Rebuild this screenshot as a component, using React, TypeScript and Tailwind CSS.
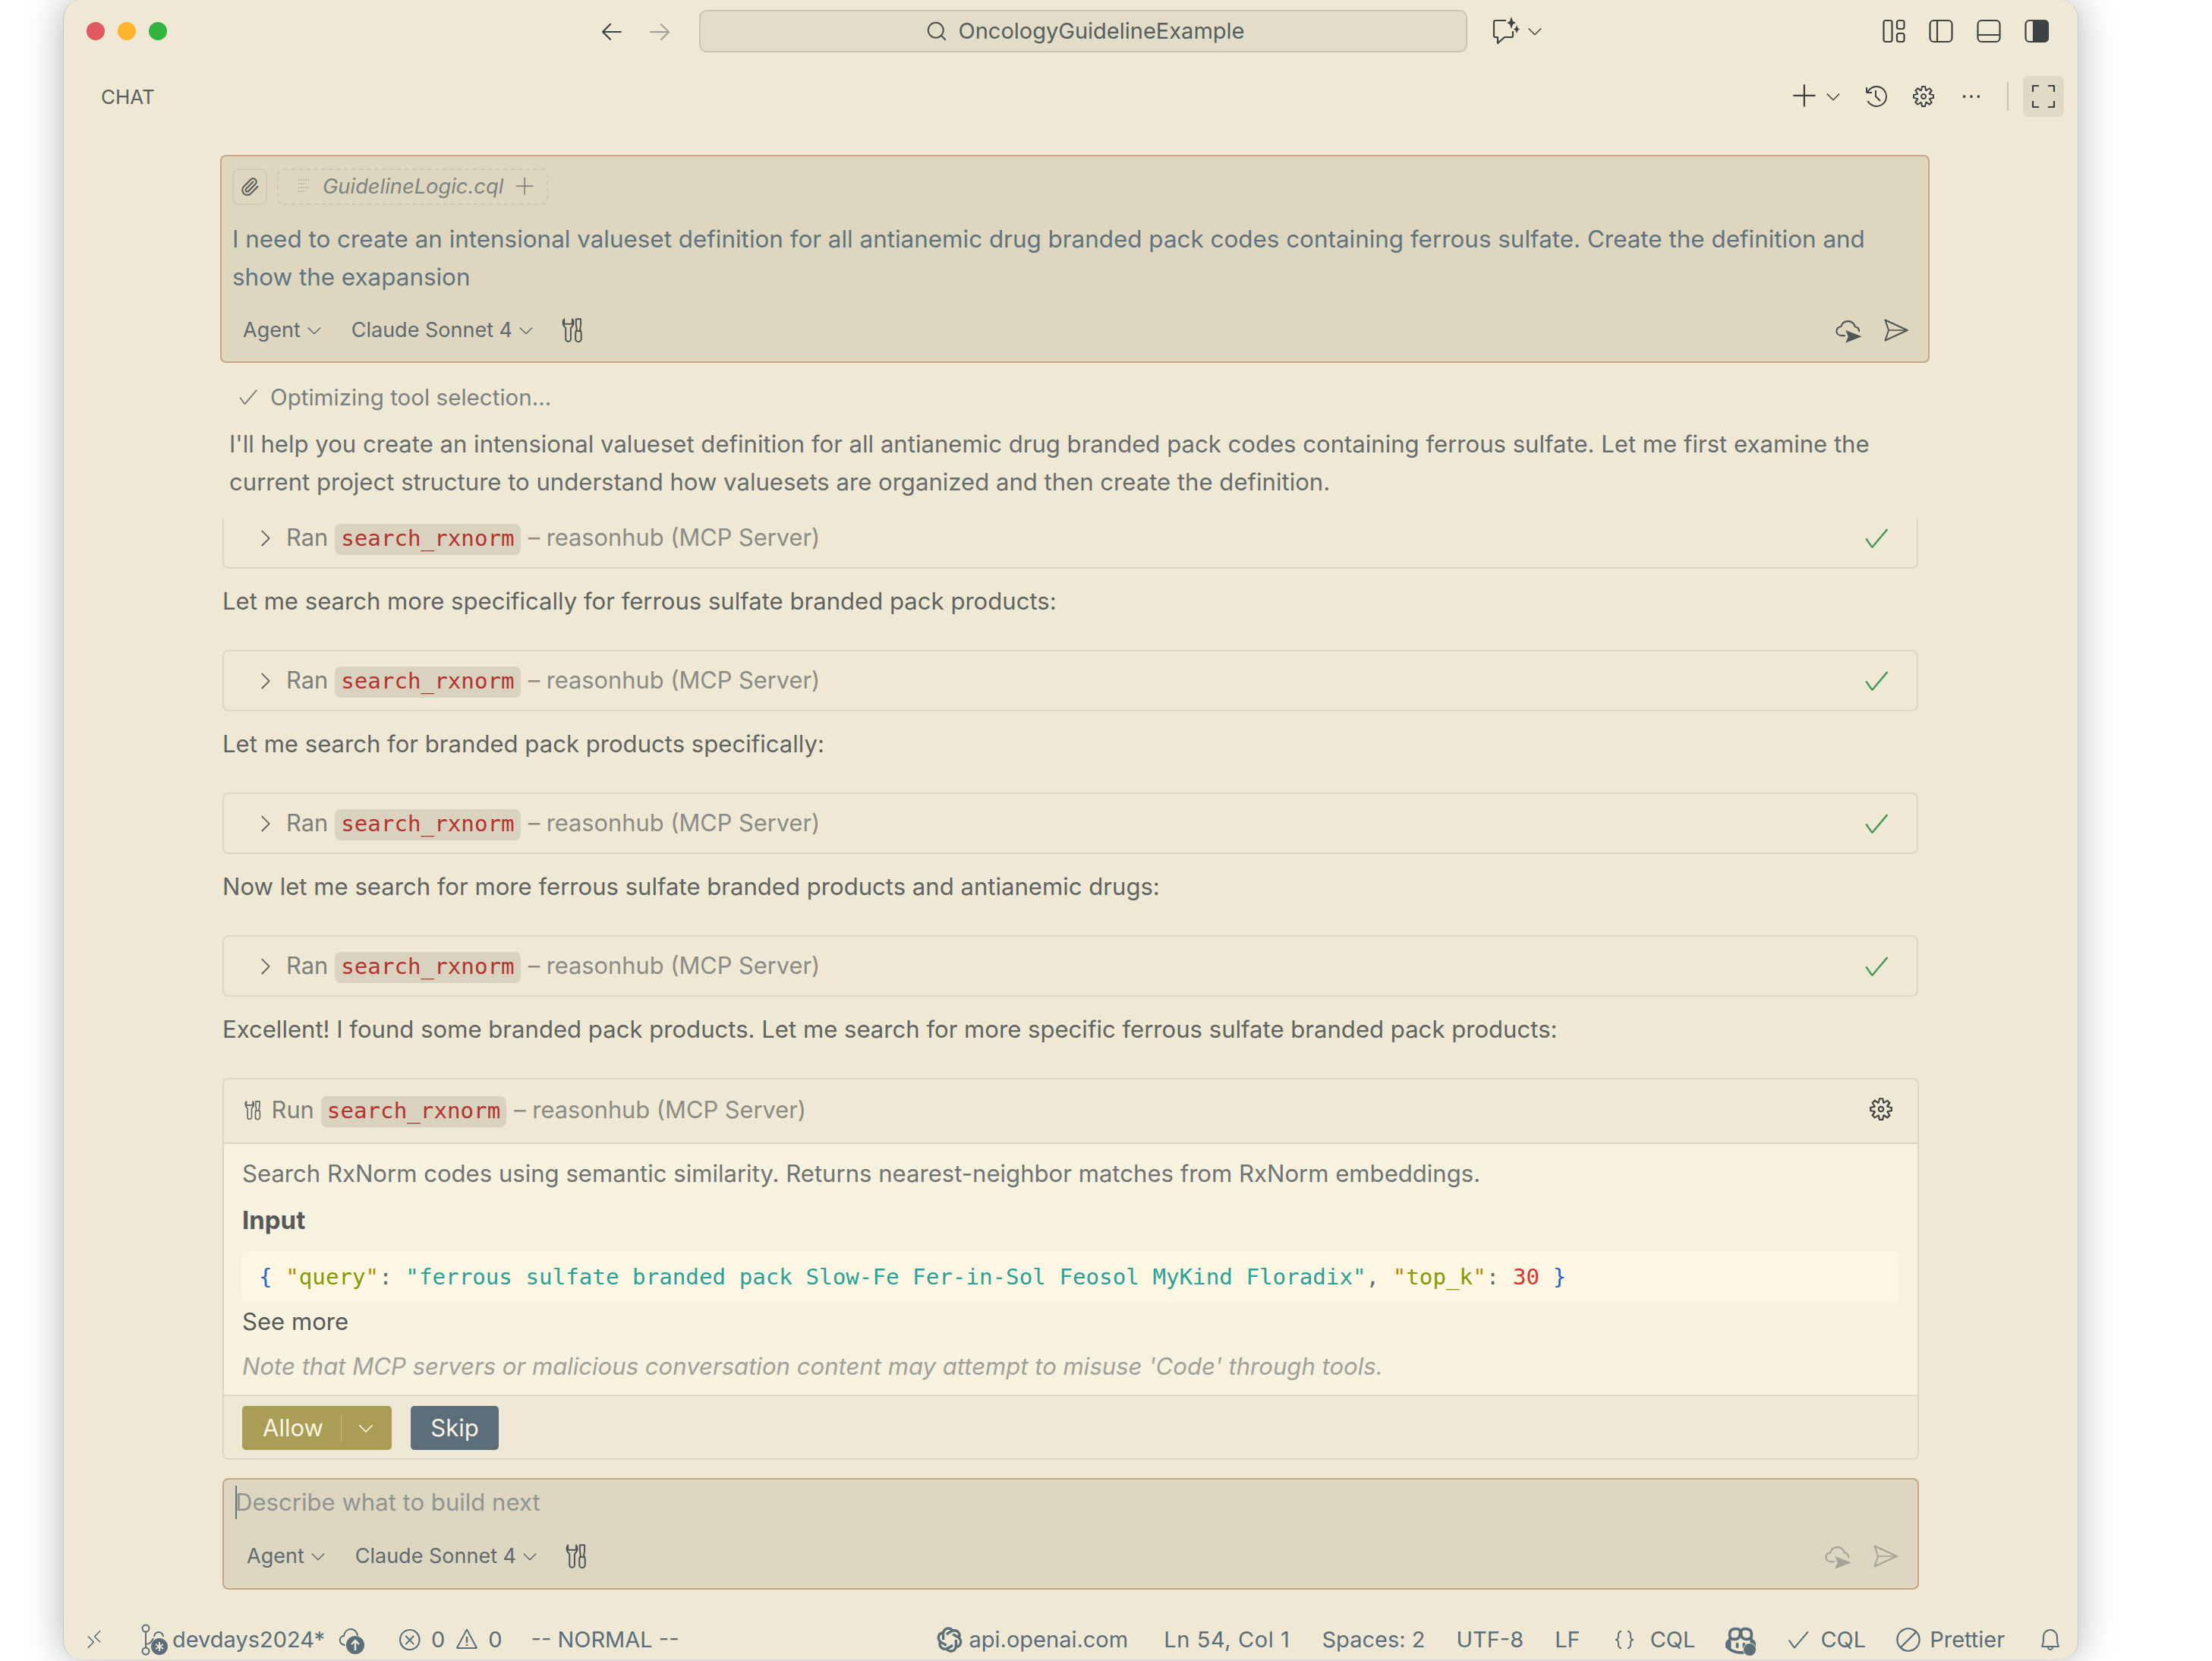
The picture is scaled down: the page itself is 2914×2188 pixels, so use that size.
import React from "react";
import { Paperclip, Search } from "lucide-react";
import { RiOpenaiLine } from "react-icons/ri";
import {
  VscAdd, VscArrowLeft, VscArrowRight, VscBell, VscCheck, VscChevronDown, VscChevronRight, VscCircleSlash,
  VscCopilot, VscEllipsis, VscError, VscGear, VscHistory, VscJson, VscRemote, VscWarning,
} from "react-icons/vsc";

function ToolsIcon({ size = 34 }: { size?: number }) {
  return (
    <svg width={size * 0.8} height={size} viewBox="0 0 26 32" fill="none" stroke="currentColor" strokeWidth="1.9" strokeLinejoin="round">
      <path d="M3 2 C1 4 1 9 3 11 C4 12 5 12.5 5 14 V27 a3.2 3.2 0 0 0 6.4 0 V14 C11.4 12.5 12.5 12 13.4 11 C15.4 9 15.4 4 13.4 2 V8 H10.4 H6 H3 Z" />
      <path d="M18 2 H24 V9 L23 15 C24 17 24.6 18 24.6 20 V27 a3.6 3.6 0 0 1 -7.2 0 V20 C17.4 18 18 17 19 15 L18 9 Z" />
      <path d="M17.6 17 H24.4" />
    </svg>
  );
}

function SendIcon({ size = 36 }: { size?: number }) {
  return (
    <svg width={size} height={size} viewBox="0 0 32 32" fill="none" stroke="currentColor" strokeWidth="1.8" strokeLinejoin="round">
      <path d="M4 4 L30 16 L4 28 L8 16 Z" />
      <path d="M8 16 H30" strokeWidth="1.4" />
    </svg>
  );
}

function CloudSendIcon({ size = 38 }: { size?: number }) {
  return (
    <svg width={size} height={size} viewBox="0 0 32 32" fill="none" stroke="currentColor" strokeWidth="1.8">
      <path d="M11 22 H8 C4 22 2 19.5 2 17 C2 14 4.5 12 7 12 C8 8 11 6 15 6 C19 6 22 9 22.5 12 C25 12.5 27 14.5 27 17" strokeLinecap="round" />
      <path d="M12 16 L30 23 L12 30 L15 23 Z" fill="currentColor" stroke="none" />
    </svg>
  );
}

function ChatSparkIcon() {
  return (
    <svg width="40" height="40" viewBox="0 0 40 40" fill="none" stroke="currentColor" strokeWidth="2.2">
      <path d="M20 6 H6 a2 2 0 0 0 -2 2 V26 a2 2 0 0 0 2 2 H9 V36 L18 28 H27 a2 2 0 0 0 2 -2 V20" strokeLinejoin="round" />
      <path d="M27 1 L29 7 L33 9 L29 11 L27 17 L25 11 L21 9 L25 7 Z" fill="currentColor" stroke="none" />
      <path d="M34 12 L35.5 16 L38 17.5 L35.5 19 L34 23 L32.5 19 L30 17.5 L32.5 16 Z" fill="currentColor" stroke="none" />
    </svg>
  );
}

function LayoutCustomIcon() {
  return (
    <svg width="30" height="32" viewBox="0 0 30 32" fill="none" stroke="currentColor" strokeWidth="2.2">
      <rect x="1.5" y="2" width="11" height="28" rx="2.5" />
      <rect x="19" y="2" width="9.5" height="11" rx="2.5" />
      <rect x="19" y="19" width="9.5" height="11" rx="2.5" />
    </svg>
  );
}

function SidebarLeftIcon() {
  return (
    <svg width="32" height="32" viewBox="0 0 32 32" fill="none" stroke="currentColor" strokeWidth="2.2">
      <rect x="1.5" y="2" width="29" height="28" rx="5" />
      <path d="M11 2 V30" />
    </svg>
  );
}

function PanelIcon() {
  return (
    <svg width="32" height="32" viewBox="0 0 32 32" fill="none" stroke="currentColor" strokeWidth="2.2">
      <rect x="1.5" y="2" width="29" height="28" rx="5" />
      <path d="M1.5 21 H30.5" />
    </svg>
  );
}

function SidebarRightFilledIcon() {
  return (
    <svg width="32" height="32" viewBox="0 0 32 32" fill="none" stroke="currentColor" strokeWidth="2.2">
      <rect x="1.5" y="2" width="29" height="28" rx="5" />
      <path d="M12 2 H26 a5 5 0 0 1 5 5 V25 a5 5 0 0 1 -5 5 H12 Z" fill="currentColor" />
    </svg>
  );
}

function FullCornersIcon() {
  return (
    <svg width="32" height="32" viewBox="0 0 32 32" fill="none" stroke="currentColor" strokeWidth="2.2">
      <path d="M2 10 V2 H10 M22 2 H30 V10 M2 22 V30 H10 M22 30 H30 V22" strokeLinejoin="round" />
    </svg>
  );
}

function GitStarIcon() {
  return (
    <svg width="38" height="44" viewBox="0 0 38 44" fill="none" stroke="currentColor" strokeWidth="2">
      <circle cx="8" cy="7" r="4.5" />
      <circle cx="8" cy="37" r="4.5" />
      <path d="M8 12 V32" />
      <path d="M8 28 C14 28 16 24 18 20" />
      <path d="M19 18 a6 6 0 0 1 12 0" />
      <circle cx="26" cy="31" r="11" fill="currentColor" stroke="none" />
      <path d="M26 25 V37 M21 28 L31 34 M31 28 L21 34" stroke="#efe8d5" strokeWidth="2" />
    </svg>
  );
}

function CloudUpIcon() {
  return (
    <svg width="36" height="40" viewBox="0 0 36 40" fill="none" stroke="currentColor" strokeWidth="2">
      <path d="M8 27 C3 26 1 23 2 19 C3 16 5 15 7 15 C8 9 12 6 16 6 C21 6 24 10 25 14" strokeLinecap="round" />
      <circle cx="22" cy="27" r="12" fill="currentColor" stroke="none" />
      <path d="M22 34 V21 M17 26 L22 21 L27 26" stroke="#efe8d5" strokeWidth="2.4" />
    </svg>
  );
}

function FileLines() {
  return (
    <svg width="18" height="24" viewBox="0 0 18 24" fill="none" stroke="#b8b29f" strokeWidth="1.6" strokeDasharray="2 1">
      <path d="M2 3 H16 M2 8 H12 M2 13 H16 M2 18 H12" />
    </svg>
  );
}

function Code() {
  return (
    <span className="inline-flex items-center h-[41px] px-[8px] rounded-[8px] bg-[#d8d2bf] text-[#b5332e] font-['DejaVu_Sans_Mono',monospace] text-[29.2px] leading-none">
      search_rxnorm
    </span>
  );
}

function RanCard({ clipped = false }: { clipped?: boolean }) {
  return (
    <div
      className={
        clipped
          ? "flex items-center w-[2234px] h-[66px] pb-[13px] mt-[23px] text-[30.8px] border-x-2 border-b-2 border-[#dcd6c3] rounded-b-[8px]"
          : "flex items-center w-[2234px] h-[81px] text-[30.8px] border-2 border-[#dcd6c3] rounded-[8px]"
      }
    >
      <VscChevronRight size={34} className="ml-[37px] text-[#5f6463]" />
      <span className="ml-[11px] text-[#7c7f7a]">Ran</span>
      <span className="ml-[9px]"><Code /></span>
      <span className="ml-[10px] text-[#8a8c85]">– reasonhub (MCP Server)</span>
      <VscCheck size={38} className="ml-auto mr-[34px] text-[#3f9a56]" />
    </div>
  );
}

function Para({ children }: { children: React.ReactNode }) {
  return <div className="mt-[18px] mb-[39px] h-[50px] leading-[50px] text-[#5f6462]">{children}</div>;
}

function Toolbar({ dim = false }: { dim?: boolean }) {
  return (
    <div className="flex items-center h-[40px] text-[27px] text-[#5f6b70]">
      <span>Agent</span>
      <VscChevronDown size={28} className="ml-[4px]" />
      <span className="ml-[35px]">Claude Sonnet 4</span>
      <VscChevronDown size={28} className="ml-[4px]" />
      <span className="ml-[33px] text-[#4d5655]"><ToolsIcon /></span>
      <span className={dim ? "ml-auto mr-[25px] flex items-center gap-[24px] text-[#a3a49a]" : "ml-auto mr-[11px] flex items-center gap-[24px] text-[#4f5857]"}>
        <CloudSendIcon />
        <SendIcon />
      </span>
    </div>
  );
}

export default function App() {
  return (
    <div className="w-[2914px] h-[2188px] bg-white overflow-hidden font-[Inter,sans-serif] text-[31.1px]">
      <div className="ml-[83px] w-[2655px] h-[2186px] flex flex-col rounded-[24px] bg-[#efe8d5] border-x border-[#c9c8c2] shadow-[0_0_50px_rgba(0,0,0,0.3)] overflow-hidden">
        {/* title bar */}
        <div className="flex items-center h-[82px] shrink-0 pl-[30px] pr-[38px]">
          <span className="w-[24px] h-[24px] rounded-full bg-[#e05a5f]" />
          <span className="ml-[17px] w-[24px] h-[24px] rounded-full bg-[#fdb52b]" />
          <span className="ml-[17px] w-[24px] h-[24px] rounded-full bg-[#32b43f]" />
          <VscArrowLeft size={34} className="ml-[569px] text-[#3c4443]" />
          <VscArrowRight size={34} className="ml-[29px] text-[#9fa39a]" />
          <div className="ml-[35px] w-[1012px] h-[56px] flex items-center justify-center gap-[14px] pl-[4px] rounded-[10px] bg-[#e3dcc8] border-2 border-[#c8c5b4] text-[#55605f] text-[29px]">
            <Search size={30} strokeWidth={1.6} className="text-[#4a5352]" />
            <span>OncologyGuidelineExample</span>
          </div>
          <span className="ml-[31px] text-[#3c4443]"><ChatSparkIcon /></span>
          <VscChevronDown size={28} className="ml-[4px] text-[#3c4443]" />
          <div className="ml-auto flex items-center gap-[31px] text-[#3c4443]">
            <LayoutCustomIcon />
            <SidebarLeftIcon />
            <PanelIcon />
            <SidebarRightFilledIcon />
          </div>
        </div>
        {/* chat header */}
        <div className="flex items-center h-[90px] shrink-0 pl-[49px] pr-[18px]">
          <span className="text-[#5a6160] text-[26px]">CHAT</span>
          <div className="ml-auto flex items-center text-[#3c4443]">
            <VscAdd size={36} />
            <VscChevronDown size={28} className="ml-[5px]" />
            <VscHistory size={32} className="ml-[27px]" />
            <VscGear size={32} className="ml-[30px]" />
            <VscEllipsis size={30} className="ml-[32px]" />
            <span className="ml-[32px] w-[2px] h-[38px] bg-[#c8c5b4]" />
            <span className="ml-[19px] w-[54px] h-[54px] rounded-[8px] bg-[#dfd9c6] flex items-center justify-center">
              <FullCornersIcon />
            </span>
          </div>
        </div>

        <div className="flex flex-col pl-[209px] flex-1 min-h-0">
          {/* prompt */}
          <div className="w-[2252px] h-[274px] mt-[32px] -ml-[3px] shrink-0 rounded-[8px] bg-[#ded6be] border-2 border-[#c6a583] pl-[14px] pr-[14px] pt-[16px]">
            <div className="flex items-center h-[48px] gap-[13px]">
              <span className="w-[46px] h-[48px] flex items-center justify-center rounded-[8px] border-2 border-[#d2cbb6] text-[#5a6160]">
                <Paperclip size={26} />
              </span>
              <span className="w-[357px] h-[48px] flex items-center rounded-[8px] border-2 border-dashed border-[#cfc8b3] pl-[24px] text-[#7d8583] text-[27.3px] italic">
                <FileLines />
                <span className="ml-[16px]">GuidelineLogic.cql</span>
                <VscAdd size={28} className="ml-[15px] not-italic" />
              </span>
            </div>
            <div className="mt-[20px] leading-[50px] text-[#5f7480] text-[31.4px] whitespace-nowrap">
              I need to create an intensional valueset definition for all antianemic drug branded pack codes containing ferrous sulfate. Create the definition and
              <br />
              show the exapansion
            </div>
            <div className="mt-[25px] pl-[14px]"><Toolbar /></div>
          </div>

          {/* progress */}
          <div className="flex items-center h-[40px] mt-[25px] pl-[19px] text-[#7b8080] text-[29.6px] shrink-0">
            <VscCheck size={30} />
            <span className="ml-[14px]">Optimizing tool selection...</span>
          </div>
          <div className="mt-[17px] ml-[9px] leading-[50px] text-[#676c6c] shrink-0 whitespace-nowrap">
            I'll help you create an intensional valueset definition for all antianemic drug branded pack codes containing ferrous sulfate. Let me first examine the
            <br />
            current project structure to understand how valuesets are organized and then create the definition.
          </div>

          <RanCard clipped />
          <Para>Let me search more specifically for ferrous sulfate branded pack products:</Para>
          <RanCard />
          <Para>Let me search for branded pack products specifically:</Para>
          <RanCard />
          <Para>Now let me search for more ferrous sulfate branded products and antianemic drugs:</Para>
          <RanCard />
          <Para>Excellent! I found some branded pack products. Let me search for more specific ferrous sulfate branded pack products:</Para>

          {/* confirmation */}
          <div className="w-[2235px] h-[503px] shrink-0 rounded-[8px] border-2 border-[#dcd6c3] overflow-hidden">
            <div className="flex items-center h-[85px] border-b-2 border-[#dcd6c3] pl-[27px] pr-[31px] pb-[2px] text-[30.8px]">
              <span className="text-[#5f6463]"><ToolsIcon size={27} /></span>
              <span className="ml-[14px] text-[#7c7f7a]">Run</span>
              <span className="ml-[9px]"><Code /></span>
              <span className="ml-[10px] text-[#8a8c85]">– reasonhub (MCP Server)</span>
              <VscGear size={34} className="ml-auto -mt-[3px] text-[#3c4443]" />
            </div>
            <div className="h-[332px] bg-[#f7f1df] border-b-2 border-[#dfd9c6] px-[24px] pt-[19px]">
              <div className="h-[40px] leading-[40px] text-[#6f7472]">
                Search RxNorm codes using semantic similarity. Returns nearest-neighbor matches from RxNorm embeddings.
              </div>
              <div className="mt-[21px] h-[40px] leading-[40px] text-[33px] font-bold text-[#555a59]">Input</div>
              <div className="mt-[21px] h-[69px] flex items-center rounded-[8px] bg-[#fdf6e3] pl-[22px] font-['DejaVu_Sans_Mono',monospace] text-[29.2px] whitespace-pre text-[#586e75]">
                <span className="text-[#2563d0]">{"{"}</span>
                <span> </span>
                <span className="text-[#b58900]">"</span>
                <span className="text-[#859900]">query</span>
                <span className="text-[#b58900]">"</span>
                <span>: </span>
                <span className="text-[#2aa198]">"ferrous sulfate branded pack Slow-Fe Fer-in-Sol Feosol MyKind Floradix"</span>
                <span>, </span>
                <span className="text-[#b58900]">"</span>
                <span className="text-[#859900]">top_k</span>
                <span className="text-[#b58900]">"</span>
                <span>: </span>
                <span className="text-[#dc322f]">30</span>
                <span> </span>
                <span className="text-[#2563d0]">{"}"}</span>
              </div>
              <div className="mt-[4px] h-[40px] leading-[40px] text-[#555a59]">See more</div>
              <div className="mt-[19px] h-[40px] leading-[40px] italic text-[#a0a29a]">
                Note that MCP servers or malicious conversation content may attempt to misuse 'Code' through tools.
              </div>
            </div>
            <div className="flex items-start gap-[25px] pl-[24px] pt-[13px]">
              <div className="flex items-center w-[197px] h-[58px] rounded-[5px] bg-[#aa9d55] text-[#f9f4e3]">
                <span className="ml-[27px] w-[103px]">Allow</span>
                <span className="w-[1px] h-[36px] bg-[#c9b98a]" />
                <VscChevronDown size={30} className="ml-[17px]" />
              </div>
              <div className="flex items-center justify-center w-[116px] h-[58px] rounded-[5px] bg-[#5b6e79] text-[#f9f4e3]">Skip</div>
            </div>
          </div>

          {/* input */}
          <div className="w-[2235px] h-[147px] mt-[24px] shrink-0 rounded-[8px] bg-[#ddd6c0] border-2 border-[#c6a583] pl-[15px] pt-[8px]">
            <div className="flex items-center h-[44px] text-[#8f9591]">
              <span className="w-[2px] h-[44px] bg-[#5f7480] -mr-[2px]" />
              <span>Describe what to build next</span>
            </div>
            <div className="mt-[29px] pl-[15px]"><Toolbar dim /></div>
          </div>
        </div>

        {/* status bar */}
        <div className="flex items-center h-[54px] shrink-0 pl-[26px] pr-[20px] pt-[2px] text-[#5b6e79] text-[29px]">
          <VscRemote size={28} />
          <span className="ml-[46px]"><GitStarIcon /></span>
          <span className="ml-[5px]">devdays2024*</span>
          <span className="ml-[18px]"><CloudUpIcon /></span>
          <VscError size={32} className="ml-[42px]" />
          <span className="ml-[12px]">0</span>
          <VscWarning size={32} className="ml-[13px]" />
          <span className="ml-[12px]">0</span>
          <span className="ml-[38px]">-- NORMAL --</span>
          <RiOpenaiLine size={40} className="ml-[336px]" />
          <span className="ml-[6px]">api.openai.com</span>
          <span className="ml-[47px] tracking-[0.6px]">Ln 54, Col 1</span>
          <span className="ml-[42px]">Spaces: 2</span>
          <span className="ml-[41px]">UTF-8</span>
          <span className="ml-[41px]">LF</span>
          <VscJson size={32} className="ml-[42px]" />
          <span className="ml-[18px]">CQL</span>
          <span className="relative ml-[40px]">
            <VscCopilot size={40} />
            <span className="absolute -right-[1px] -bottom-[2px] w-[18px] h-[18px] rounded-full bg-[#5b6e79] border border-[#efe8d5]" />
          </span>
          <VscCheck size={34} className="ml-[39px]" />
          <span className="ml-[12px]">CQL</span>
          <VscCircleSlash size={36} className="ml-[38px]" />
          <span className="ml-[10px]">Prettier</span>
          <VscBell size={32} className="ml-auto" />
        </div>
      </div>
    </div>
  );
}
